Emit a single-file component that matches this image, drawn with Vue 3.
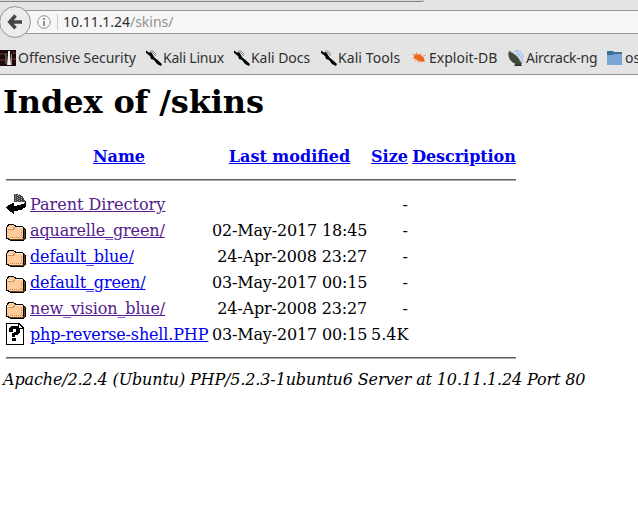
<script setup>
const rows = [
  { icon: 'back', name: 'Parent Directory', date: '', size: '-', visited: true },
  { icon: 'folder', name: 'aquarelle_green/', date: '02-May-2017 18:45', size: '-', visited: true },
  { icon: 'folder', name: 'default_blue/', date: '24-Apr-2008 23:27', size: '-' },
  { icon: 'folder', name: 'default_green/', date: '03-May-2017 00:15', size: '-' },
  { icon: 'folder', name: 'new_vision_blue/', date: '24-Apr-2008 23:27', size: '-', visited: true },
  { icon: 'unknown', name: 'php-reverse-shell.PHP', date: '03-May-2017 00:15', size: '5.4K' }
]
const bookmarks = [
  { icon: 'offsec', label: 'Offensive Security', cls: 'b-off' },
  { icon: 'kali', label: 'Kali Linux', cls: 'b-linux' },
  { icon: 'kali', label: 'Kali Docs', cls: 'b-docs' },
  { icon: 'kali', label: 'Kali Tools', cls: 'b-tools' },
  { icon: 'exploit', label: 'Exploit-DB', cls: 'b-exp' },
  { icon: 'aircrack', label: 'Aircrack-ng', cls: 'b-air' },
  { icon: 'dir', label: 'os', cls: 'b-os' }
]
</script>

<template>
  <div class="window">
    <header class="chrome">
      <div class="tabline"></div>
      <div class="navbar">
        <svg class="back" width="32" height="32" viewBox="0 0 32 32">
          <circle cx="15" cy="16" r="15.4" fill="#ececec" stroke="#929292" />
          <path d="M15.5 9.5 9.8 16l5.7 6.2M10.5 16H22" fill="none" stroke="#464646" stroke-width="3.5" />
        </svg>
        <div class="urlbar">
          <svg class="info" width="14" height="14" viewBox="0 0 14 14">
            <circle cx="7" cy="7" r="6.3" fill="none" stroke="#929292" />
            <path d="M6 3h2v2H6zM6 6h2v5H6z" fill="#929292" />
          </svg>
          <i class="sep"></i>
          <span class="url">10.11.1.24<em>/skins/</em></span>
        </div>
      </div>
      <nav class="bookmarks">
        <a v-for="b in bookmarks" :key="b.label" class="bookmark" :class="b.cls">
          <svg width="16" height="16" viewBox="0 0 16 16">
            <template v-if="b.icon === 'offsec'">
              <path d="M0 0h16v16H0z" fill="#1c0b0b" />
              <path d="M0 3h5v2H0zM12 2h4v2h-4zM0 9h5v2H0zM12 8h4v2h-4z" fill="#48211f" />
              <path d="M5.500 3h1v11h-1zM11 4h1v11h-1z" fill="#8d827e" />
              <path d="M8 1h2v4l1 10H7L8 5z" fill="#f5f1ed" />
            </template>
            <template v-else-if="b.icon === 'kali'">
              <path d="M0 .5l3 2 2-.5 2 3 1.500 2.500 3 2.500 4.500 4-1 2-4-2-3-4-3-1-1-3-4-3z" fill="#000" />
              <path d="M4 .7q4-.6 6 3.300M6 2l4 4" fill="none" stroke="#666" stroke-width=".7" />
            </template>
            <template v-else-if="b.icon === 'exploit'">
              <path d="M3 5q3-2 7 0l3 3 .5 3q-4 1.500-7-.5L3 8z" fill="#ee6516" />
              <path d="M1 4l5 2M5 2l2 4M1 8l5 1M4 11l3-2M7 13l2-3M10 3l-1 4M12 6l3-1M11 11l3 1" stroke="#f08348" stroke-width=".7" />
            </template>
            <template v-else-if="b.icon === 'aircrack'">
              <path d="M9 11l3 1 2 4H6z" fill="#34352c" />
              <path d="M6 1q6 1 9 11M8 0q6 1 8 8M9 4q3 1 5 5" fill="none" stroke="#a7c5f0" stroke-width="1.4" />
              <path d="M1 1q-2 5 2 10 4 4 11 3L9 6z" fill="#43483c" />
              <path d="M1 1q8 3 13 13" fill="none" stroke="#777d70" stroke-width=".8" />
            </template>
            <template v-else>
              <path d="M0 1h6l1 1h8v4H0z" fill="#3f6e99" />
              <path d="M0 5h6l1-1h8v11H0z" fill="#79a5d7" />
            </template>
          </svg>
          <span>{{ b.label }}</span>
        </a>
      </nav>
    </header>
    <main class="page">
      <h1>Index of /skins</h1>
      <section class="listing">
        <div class="row head">
          <span></span><a>Name</a><a>Last modified</a><a>Size</a><a class="desc">Description</a>
        </div>
        <div class="rule"></div>
        <div v-for="r in rows" :key="r.name" class="row">
          <svg :class="r.icon" width="20" height="22" viewBox="0 0 20 22" shape-rendering="crispEdges">
            <template v-if="r.icon === 'back'">
              <path d="M8 1h4v1h3v1h2v2h1v2h1v2H8z" fill="#444" />
              <path d="M9.500 1v8M11.500 2v7M13.500 1v8M15.500 4v5" stroke="#999" stroke-dasharray="1 1" />
              <path d="M19 8h1v5l-2 2-3 2-7 1v3H7l-2-2-5-4v-1l5-3 2-1h1v3l5-1 4-1 2-1z" fill="#000" />
            </template>
            <template v-else-if="r.icon === 'folder'">
              <path d="M2 2h6v1h2v1h7v1h1v1h1v1h1v10h-1v1h-1v1H4v-1H2v-1H0V5h1V3h1z" fill="#000" />
              <path d="M3 3h5v1h1v1h8v12H3v-1H1V5h1V4h1z" fill="#ffcc99" />
              <path d="M2 6.500h5M9 5.500h7" stroke="#ffe8d0" fill="none" />
              <path d="M2 7.500h5l2-2" fill="none" stroke="#c89664" />
              <path d="M4 15.500h13M15.500 8v8" fill="none" stroke="#c08a58" stroke-dasharray="1 1" />
              <path d="M18 7v10H4" fill="none" stroke="#664022" />
            </template>
            <template v-else>
              <path d="M0 0h13l5 5v17H0z" fill="#000" />
              <path d="M1 1h11v5h5v15H1z" fill="#fff" />
              <path d="M13 2l3 3h-3z" fill="#fff" />
              <path d="M3 6l2-3h6l3 3v4l-3 2H9v2H6v-4l4-1V6H7v3H3zM6 15h4v3H6z" fill="#000" />
            </template>
          </svg>
          <span><a :class="{ visited: r.visited, tight: r.icon !== 'back' }">{{ r.name }}</a></span>
          <span class="right date">{{ r.date }}</span>
          <span class="right">{{ r.size }}</span>
          <span></span>
        </div>
        <div class="rule last"></div>
      </section>
      <address>Apache/2.2.4 (Ubuntu) PHP/5.2.3-1ubuntu6 Server at 10.11.1.24 Port 80</address>
    </main>
  </div>
</template>

<style>
body { margin: 0; background: #fff; overflow: hidden; }
</style>
<style scoped>
* { box-sizing: border-box; }
.window { width: 638px; height: 511px; overflow: hidden; background: #fff; }
.chrome { height: 75px; background: #e4e4e4; border-bottom: 1px solid #949494; font-family: "Noto Sans", sans-serif; font-size: 14px; color: #303030; overflow: hidden; }
.tabline { width: 424px; height: 2px; background: #d8d8d8; border-bottom: 1px solid #858585; border-radius: 0 0 4px 0; }
.navbar { display: flex; align-items: center; height: 40px; }
.back { flex: none; }
.navbar .back { position: relative; z-index: 1; }
.urlbar { display: flex; align-items: center; flex: 1; height: 24px; margin-left: -10px; padding-left: 15px; background: #f7f7f7; border: solid #999; border-width: 1px 0; }
.info { flex: none; }
.sep { width: 1px; height: 16px; margin: 0 5px 0 6px; background: #ccc; }
.url { letter-spacing: -.03px; white-space: nowrap; line-height: 20px; }
.url em { color: #929292; font-style: normal; }
.bookmarks { display: flex; height: 32px; align-items: center; }
.bookmark { display: flex; align-items: center; flex: none; gap: 2px; line-height: 20px; white-space: nowrap; color: #303030; }
.bookmark svg { flex: none; }
.b-off { width: 146px; letter-spacing: -.05px; }
.b-linux { width: 88px; letter-spacing: -.22px; }
.b-docs { width: 87px; letter-spacing: -.05px; }
.b-tools { width: 90px; letter-spacing: .08px; }
.b-exp { width: 97px; letter-spacing: 0; }
.b-air { width: 99px; letter-spacing: -.25px; }
.b-linux, .b-docs, .b-tools { gap: 1px; }
.page { padding: 0 3px; font-family: "DejaVu Serif", serif; font-size: 16px; color: #000; }
h1 { margin: 0; padding-top: 8px; height: 70px; font-size: 32px; line-height: 38px; letter-spacing: -.13px; white-space: nowrap; }
.listing { width: 510px; margin-left: 3px; }
.row { display: grid; grid-template-columns: 20px 178px 155px 37px 104px; grid-template-rows: 24px; column-gap: 4px; height: 24px; margin-bottom: 2px; align-items: center; line-height: 20px; white-space: nowrap; }
.row svg { display: block; margin-bottom: 2px; }
.row svg.folder { margin: 3px 0 0; align-self: start; }
.row.head { margin: 0; font-weight: bold; text-align: center; }
.desc { letter-spacing: -.06px; }
.right { text-align: right; }
.date { letter-spacing: -.17px; }
.page a { color: #0000ee; text-decoration: underline; }
.page a.visited { color: #551a8b; }
.page a.tight { letter-spacing: -.145px; }
.rule { height: 2px; margin: 10px 0 12px; border-top: 1px solid #606060; border-bottom: 1px solid #aaa; }
.rule.last { margin: 10px 0 11px; }
address { line-height: 20px; letter-spacing: -.133px; white-space: nowrap; }
</style>
